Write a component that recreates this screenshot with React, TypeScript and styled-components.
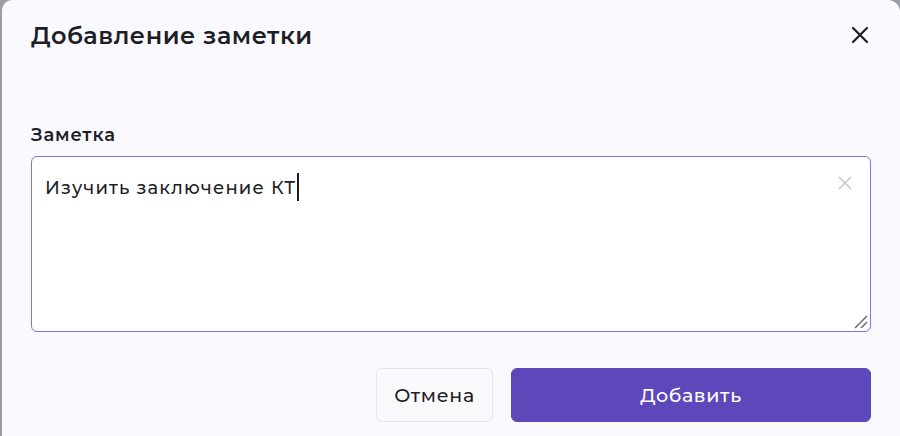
import React from "react";
import styled, { createGlobalStyle } from "styled-components";

const Global = createGlobalStyle`
  html, body { margin: 0; padding: 0; }
  body {
    background: #9b9da4;
    font-family: "Montserrat", "Inter", "Noto Sans", sans-serif;
    overflow: hidden;
  }
`;

const Backdrop = styled.div`
  width: 900px;
  height: 436px;
  display: flex;
  padding-left: 2px;
  box-sizing: border-box;
  overflow: hidden;
`;

const Modal = styled.div`
  flex: 1;
  height: 470px;
  background: #f9f9fe;
  border-radius: 10px 12px 0 0;
  padding: 19px 29px 0 29px;
  box-sizing: border-box;
  display: flex;
  flex-direction: column;
`;

const Header = styled.div`
  display: flex;
  align-items: center;
  justify-content: space-between;
  height: 32px;
`;

const Title = styled.h2`
  margin: 0;
  font-size: 24px;
  font-weight: 600;
  color: #1d1f27;
  letter-spacing: 0.55px;
`;

const CloseButton = styled.button`
  width: 24px;
  height: 24px;
  margin-right: -1px;
  padding: 0;
  border: none;
  background: transparent;
  display: flex;
  align-items: center;
  justify-content: center;
  color: #1d1f27;
  cursor: pointer;
`;

const Field = styled.div`
  margin-top: 73px;
  display: flex;
  flex-direction: column;
  gap: 10px;
`;

const Label = styled.label`
  font-size: 18px;
  font-weight: 600;
  color: #1d1f27;
  line-height: 22px;
  letter-spacing: 0.85px;
`;

const TextBox = styled.div`
  position: relative;
  height: 176px;
  box-sizing: border-box;
  border: 1px solid #8a6cf0;
  border-radius: 6px;
  background: #ffffff;
  padding: 16px 13px;
  font-size: 18px;
  font-weight: 500;
  line-height: 28px;
  letter-spacing: 1.15px;
  color: #1d1f27;
`;

const Caret = styled.span`
  display: inline-block;
  width: 2px;
  height: 28px;
  background: #1d1f27;
  vertical-align: -7px;
  margin-left: 1px;
`;

const ClearIcon = styled.span`
  position: absolute;
  top: 19px;
  right: 18px;
  color: #c3c4ce;
  display: flex;
`;

const Resizer = styled.span`
  position: absolute;
  right: 2px;
  bottom: 2px;
  display: flex;
`;

const Footer = styled.div`
  margin-top: 36px;
  display: flex;
  justify-content: flex-end;
  gap: 18px;
`;

const Button = styled.button<{ $primary?: boolean }>`
  height: 54px;
  width: ${(p) => (p.$primary ? "360px" : "117px")};
  box-sizing: border-box;
  border-radius: 6px;
  border: 1px solid ${(p) => (p.$primary ? "#5d47bb" : "#e4e5ea")};
  background: ${(p) => (p.$primary ? "#5d47bb" : "#fafafc")};
  color: ${(p) => (p.$primary ? "#ffffff" : "#1d1f27")};
  font-family: inherit;
  font-size: 19px;
  font-weight: 500;
  letter-spacing: 0.7px;
  cursor: pointer;
`;

export default function App() {
  return (
    <>
      <Global />
      <Backdrop>
        <Modal>
          <Header>
            <Title>Добавление заметки</Title>
            <CloseButton aria-label="Закрыть">
              <svg width="18" height="18" viewBox="0 0 18 18">
                <path d="M2 2 L16 16 M16 2 L2 16" stroke="currentColor" strokeWidth="2.2" strokeLinecap="round" />
              </svg>
            </CloseButton>
          </Header>
          <Field>
            <Label>Заметка</Label>
            <TextBox>
              Изучить заключение КТ<Caret />
              <ClearIcon>
                <svg width="14" height="14" viewBox="0 0 14 14">
                  <path d="M1 1 L13 13 M13 1 L1 13" stroke="currentColor" strokeWidth="1.5" />
                </svg>
              </ClearIcon>
              <Resizer>
                <svg width="16" height="16" viewBox="0 0 16 16">
                  <path d="M15 3 L3 15 M15 9 L9 15" stroke="#6b6b6b" strokeWidth="1.5" />
                </svg>
              </Resizer>
            </TextBox>
          </Field>
          <Footer>
            <Button>Отмена</Button>
            <Button $primary>Добавить</Button>
          </Footer>
        </Modal>
      </Backdrop>
    </>
  );
}
